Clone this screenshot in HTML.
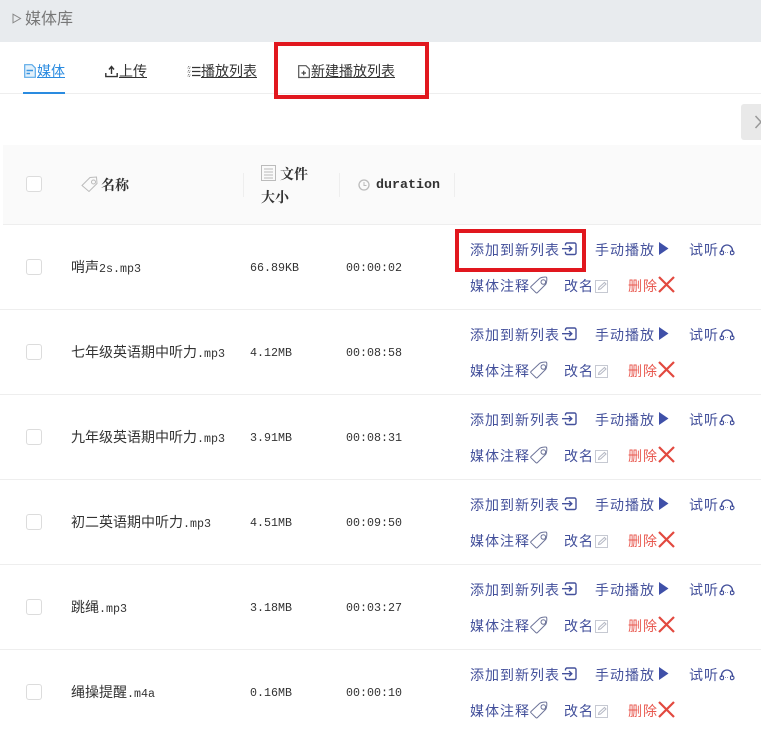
<!DOCTYPE html>
<html lang="zh"><head><meta charset="utf-8"><style>
*{box-sizing:border-box}
html,body{margin:0;padding:0}
body{width:761px;height:730px;overflow:hidden;background:#fff;position:relative;font-family:"Liberation Sans","Noto Sans CJK SC",sans-serif;color:#333}
.a{position:absolute;white-space:nowrap}
svg{position:absolute;overflow:visible;fill:none}
.cb{position:absolute;left:26px;width:16px;height:16px;border:1px solid #dcdcdc;border-radius:3px;background:#fff}
.row{position:absolute;left:0;width:761px;height:85px;border-bottom:1px solid #eee}
.n,.t{position:absolute;font:14px/16px "WenQuanYi Zen Hei","Noto Sans CJK SC",monospace;color:#333;white-space:nowrap;top:34px}
.n b,.t{font:400 11.67px/16px "Liberation Mono",monospace}
.t{top:35px}
.n b{line-height:16px}
.l{position:absolute;font-size:14px;line-height:18px;color:#43509b;letter-spacing:1px;white-space:nowrap}
.r{color:#e8584f}
.tab{position:absolute;top:62px;font-size:14px;line-height:18px;text-decoration:underline;color:#333;white-space:nowrap}
.h{position:absolute;font:700 14px/18px "Noto Serif CJK SC","Noto Sans CJK SC",serif;color:#333;white-space:nowrap}
</style></head><body>
<svg width="0" height="0" style="left:0;top:0"><defs>
<symbol id="i-in" viewBox="0 0 15 14" overflow="visible"><path d="M3.500 3.500V2.500a1.500 1.500 0 0 1 1.500-1.500H12.500a1.500 1.500 0 0 1 1.500 1.500V11a1.500 1.500 0 0 1-1.500 1.500H5a1.500 1.500 0 0 1-1.500-1.500V9.800M0 6.700H9.500M7 4 9.800 6.700 7 9.400" stroke="#43509b" stroke-width="1.400"/></symbol>
<symbol id="i-hp" viewBox="0 0 16 13" overflow="visible"><path d="M2.500 9V7.500a5.500 5.500 0 0 1 11 0V9" stroke="#43509b" stroke-width="1.300"/><path d="M1 9.500a2 2 0 0 1 3.500-1V11a2 2 0 0 1-3.500-1.500ZM15 9.500a2 2 0 0 0-3.500-1V11a2 2 0 0 0 3.500-1.500Z" stroke="#43509b" stroke-width="1.100"/><path d="M6 9.500H10" stroke="#8b93c0" stroke-dasharray="1 1"/></symbol>
<symbol id="i-tag" viewBox="0 0 18 18" overflow="visible"><path d="M1 10.500 9.500 2.500C10.500 1.500 15 .5 16.500 1.200 17.300 3 16.500 7.500 15.500 8.500L7.500 16.500C7 17 6.300 17 5.800 16.500L1 11.800C.6 11.400.6 10.900 1 10.500ZM11 6a2.300 2.300 0 1 0 4.600 0 2.300 2.300 0 1 0-4.600 0" stroke="#6d7499"/></symbol>
<symbol id="i-ed" viewBox="0 0 14 14" overflow="visible"><path d="M.5 1.500H12.500V13.500H.5Z" stroke="#c6c9d2"/><path d="M3.500 10.500 4 8.500 9.500 3.500 11 5 5.500 10Z" stroke="#b5b8c4"/></symbol>
</defs></svg>

<div class="a" style="left:0;top:0;width:761px;height:42px;background:#e8ebee"></div>
<svg style="left:12px;top:13px" width="10" height="11"><path d="M1 1.200 8.500 5.500 1 9.800Z" stroke="#888"/></svg>
<div class="a" style="left:25px;top:10px;font-size:16px;line-height:20px;color:#777">媒体库</div>

<div class="a" style="left:0;top:93px;width:761px;height:1px;background:#eee"></div>
<div class="a" style="left:23px;top:92px;width:42px;height:2px;background:#2a8be0"></div>
<svg style="left:24px;top:64px" width="12" height="14"><path d="M.7.700H8L11.300 4V13.300H.7Z" stroke="#5aa9e8" fill="#e3f1fb" stroke-width="1.200"/><path d="M2.500 6.500H9M2.500 9.500H6" stroke="#3a94e0" stroke-width="1.500"/></svg>
<div class="tab" style="left:37px;color:#2a8be0">媒体</div>
<svg style="left:105px;top:65px" width="13" height="13"><path d="M6.500 9V2M4 4.500 6.500 1.500 9 4.500M.8 8V11.600H12.200V8" stroke="#333" stroke-width="1.400"/></svg>
<div class="tab" style="left:119px">上传</div>
<svg style="left:187px;top:65px" width="14" height="13"><path d="M5 2.500H13.500M5 6.500H13.500M5 10.500H13.500" stroke="#333" stroke-width="1.200"/><path d="M1 1.500H3V3.500H1ZM1 5.500H3V7.500H1ZM1 9.500H3V11.500H1Z" stroke="#888" stroke-dasharray="1 1"/></svg>
<div class="tab" style="left:201px">播放列表</div>
<svg style="left:298px;top:65px" width="12" height="13"><path d="M.7.700H8L11.300 4V12.500H.7Z" stroke="#555" stroke-width="1.200"/><path d="M3.500 8H8M5.700 5.800V10.200" stroke="#444" stroke-width="1.200"/></svg>
<div class="tab" style="left:311px">新建播放列表</div>
<div class="a" style="left:274px;top:42px;width:155px;height:57px;border:4px solid #e1171e"></div>

<div class="a" style="left:741px;top:104px;width:20px;height:36px;background:#e9e9e9;border-radius:3px 0 0 3px"></div>
<svg style="left:755px;top:115px" width="6" height="14"><path d="M.5 1 6 7 .5 13" stroke="#999" stroke-width="1.500"/></svg>

<div class="a" style="left:3px;top:145px;width:758px;height:80px;background:#fafafa;border-bottom:1px solid #eee"></div>
<div class="cb" style="top:176px"></div>
<svg style="left:81px;top:176px" width="17" height="17"><path d="M1 9.500 9 1.500 15.500 1 16 7.500 8 15.500ZM10.500 6a2 2 0 1 0 4 0 2 2 0 1 0-4 0" stroke="#bbb"/></svg>
<div class="h" style="left:101px;top:176px">名称</div>
<div class="a" style="left:243px;top:173px;width:1px;height:24px;background:#eee"></div>
<svg style="left:261px;top:165px" width="15" height="16"><path d="M.5.500H14.500V15.500H.5ZM3 4H12M3 7H12M3 10H12M3 13H12" stroke="#bbb"/></svg>
<div class="h" style="left:280px;top:165px">文件</div>
<div class="h" style="left:261px;top:188px">大小</div>
<div class="a" style="left:339px;top:173px;width:1px;height:24px;background:#eee"></div>
<svg style="left:358px;top:179px" width="12" height="12"><circle cx="6" cy="6" r="5" stroke="#bbb" stroke-width="1.300"/><path d="M6 3V6.500H8.500" stroke="#bbb"/></svg>
<div class="a" style="left:376px;top:178px;font:700 13.33px/16px 'Liberation Mono',monospace;color:#333">duration</div>
<div class="a" style="left:454px;top:173px;width:1px;height:24px;background:#eee"></div>

<div class="row" style="top:225px"><div class="cb" style="top:34px"></div><div class="n" style="left:71px">哨声<b>2s.mp3</b></div><div class="t" style="left:250px">66.89KB</div><div class="t" style="left:346px">00:00:02</div>
<div class="l" style="left:470px;top:16px">添加到新列表</div><svg style="left:562px;top:17px" width="15" height="14"><use href="#i-in"/></svg><div class="l" style="left:595px;top:16px">手动播放</div><svg style="left:659px;top:17px" width="10" height="13"><path d="M0 0 9.500 6.500 0 13Z" fill="#3f50a8"/></svg><div class="l" style="left:689px;top:16px">试听</div><svg style="left:719px;top:18px" width="16" height="13"><use href="#i-hp"/></svg>
<div class="l" style="left:470px;top:52px">媒体注释</div><svg style="left:530px;top:51px" width="18" height="18"><use href="#i-tag"/></svg><div class="l" style="left:564px;top:52px">改名</div><svg style="left:595px;top:54px" width="14" height="14"><use href="#i-ed"/></svg><div class="l r" style="left:628px;top:52px">删除</div><svg style="left:658px;top:51px" width="17" height="17"><path d="M1 1 16 16M16 1 1 16" stroke="#e2493f" stroke-width="2.200"/></svg></div>

<div class="row" style="top:310px"><div class="cb" style="top:34px"></div><div class="n" style="left:71px">七年级英语期中听力<b>.mp3</b></div><div class="t" style="left:250px">4.12MB</div><div class="t" style="left:346px">00:08:58</div>
<div class="l" style="left:470px;top:16px">添加到新列表</div><svg style="left:562px;top:17px" width="15" height="14"><use href="#i-in"/></svg><div class="l" style="left:595px;top:16px">手动播放</div><svg style="left:659px;top:17px" width="10" height="13"><path d="M0 0 9.500 6.500 0 13Z" fill="#3f50a8"/></svg><div class="l" style="left:689px;top:16px">试听</div><svg style="left:719px;top:18px" width="16" height="13"><use href="#i-hp"/></svg>
<div class="l" style="left:470px;top:52px">媒体注释</div><svg style="left:530px;top:51px" width="18" height="18"><use href="#i-tag"/></svg><div class="l" style="left:564px;top:52px">改名</div><svg style="left:595px;top:54px" width="14" height="14"><use href="#i-ed"/></svg><div class="l r" style="left:628px;top:52px">删除</div><svg style="left:658px;top:51px" width="17" height="17"><path d="M1 1 16 16M16 1 1 16" stroke="#e2493f" stroke-width="2.200"/></svg></div>

<div class="row" style="top:395px"><div class="cb" style="top:34px"></div><div class="n" style="left:71px">九年级英语期中听力<b>.mp3</b></div><div class="t" style="left:250px">3.91MB</div><div class="t" style="left:346px">00:08:31</div>
<div class="l" style="left:470px;top:16px">添加到新列表</div><svg style="left:562px;top:17px" width="15" height="14"><use href="#i-in"/></svg><div class="l" style="left:595px;top:16px">手动播放</div><svg style="left:659px;top:17px" width="10" height="13"><path d="M0 0 9.500 6.500 0 13Z" fill="#3f50a8"/></svg><div class="l" style="left:689px;top:16px">试听</div><svg style="left:719px;top:18px" width="16" height="13"><use href="#i-hp"/></svg>
<div class="l" style="left:470px;top:52px">媒体注释</div><svg style="left:530px;top:51px" width="18" height="18"><use href="#i-tag"/></svg><div class="l" style="left:564px;top:52px">改名</div><svg style="left:595px;top:54px" width="14" height="14"><use href="#i-ed"/></svg><div class="l r" style="left:628px;top:52px">删除</div><svg style="left:658px;top:51px" width="17" height="17"><path d="M1 1 16 16M16 1 1 16" stroke="#e2493f" stroke-width="2.200"/></svg></div>

<div class="row" style="top:480px"><div class="cb" style="top:34px"></div><div class="n" style="left:71px">初二英语期中听力<b>.mp3</b></div><div class="t" style="left:250px">4.51MB</div><div class="t" style="left:346px">00:09:50</div>
<div class="l" style="left:470px;top:16px">添加到新列表</div><svg style="left:562px;top:17px" width="15" height="14"><use href="#i-in"/></svg><div class="l" style="left:595px;top:16px">手动播放</div><svg style="left:659px;top:17px" width="10" height="13"><path d="M0 0 9.500 6.500 0 13Z" fill="#3f50a8"/></svg><div class="l" style="left:689px;top:16px">试听</div><svg style="left:719px;top:18px" width="16" height="13"><use href="#i-hp"/></svg>
<div class="l" style="left:470px;top:52px">媒体注释</div><svg style="left:530px;top:51px" width="18" height="18"><use href="#i-tag"/></svg><div class="l" style="left:564px;top:52px">改名</div><svg style="left:595px;top:54px" width="14" height="14"><use href="#i-ed"/></svg><div class="l r" style="left:628px;top:52px">删除</div><svg style="left:658px;top:51px" width="17" height="17"><path d="M1 1 16 16M16 1 1 16" stroke="#e2493f" stroke-width="2.200"/></svg></div>

<div class="row" style="top:565px"><div class="cb" style="top:34px"></div><div class="n" style="left:71px">跳绳<b>.mp3</b></div><div class="t" style="left:250px">3.18MB</div><div class="t" style="left:346px">00:03:27</div>
<div class="l" style="left:470px;top:16px">添加到新列表</div><svg style="left:562px;top:17px" width="15" height="14"><use href="#i-in"/></svg><div class="l" style="left:595px;top:16px">手动播放</div><svg style="left:659px;top:17px" width="10" height="13"><path d="M0 0 9.500 6.500 0 13Z" fill="#3f50a8"/></svg><div class="l" style="left:689px;top:16px">试听</div><svg style="left:719px;top:18px" width="16" height="13"><use href="#i-hp"/></svg>
<div class="l" style="left:470px;top:52px">媒体注释</div><svg style="left:530px;top:51px" width="18" height="18"><use href="#i-tag"/></svg><div class="l" style="left:564px;top:52px">改名</div><svg style="left:595px;top:54px" width="14" height="14"><use href="#i-ed"/></svg><div class="l r" style="left:628px;top:52px">删除</div><svg style="left:658px;top:51px" width="17" height="17"><path d="M1 1 16 16M16 1 1 16" stroke="#e2493f" stroke-width="2.200"/></svg></div>

<div class="row" style="top:650px;border-bottom:0"><div class="cb" style="top:34px"></div><div class="n" style="left:71px">绳操提醒<b>.m4a</b></div><div class="t" style="left:250px">0.16MB</div><div class="t" style="left:346px">00:00:10</div>
<div class="l" style="left:470px;top:16px">添加到新列表</div><svg style="left:562px;top:17px" width="15" height="14"><use href="#i-in"/></svg><div class="l" style="left:595px;top:16px">手动播放</div><svg style="left:659px;top:17px" width="10" height="13"><path d="M0 0 9.500 6.500 0 13Z" fill="#3f50a8"/></svg><div class="l" style="left:689px;top:16px">试听</div><svg style="left:719px;top:18px" width="16" height="13"><use href="#i-hp"/></svg>
<div class="l" style="left:470px;top:52px">媒体注释</div><svg style="left:530px;top:51px" width="18" height="18"><use href="#i-tag"/></svg><div class="l" style="left:564px;top:52px">改名</div><svg style="left:595px;top:54px" width="14" height="14"><use href="#i-ed"/></svg><div class="l r" style="left:628px;top:52px">删除</div><svg style="left:658px;top:51px" width="17" height="17"><path d="M1 1 16 16M16 1 1 16" stroke="#e2493f" stroke-width="2.200"/></svg></div>

<div class="a" style="left:455px;top:229px;width:131px;height:43px;border:4px solid #e1171e"></div>
</body></html>
